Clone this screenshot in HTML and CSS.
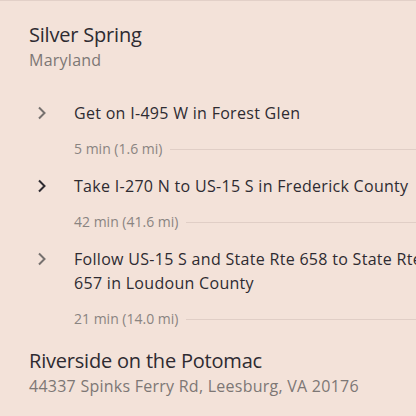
FILE: index.html
```html
<!DOCTYPE html>
<html lang="en">
<head>
  <meta charset="UTF-8">
  <title>Directions</title>
  <link rel="stylesheet" href="styles.css">
</head>
<body>
  <div class="panel">
    <div class="place">
      <div class="place-name">Silver Spring</div>
      <div class="place-sub">Maryland</div>
    </div>

    <div class="steps">
      <div class="step">
        <span class="chev"><svg width="10" height="14" viewBox="0 0 10 14"><path d="M2 1.5 L7.5 7 L2 12.5" fill="none" stroke="currentColor" stroke-width="2"/></svg></span>
        <span class="step-text">Get on I-495 W in Forest Glen</span>
      </div>
      <div class="meta"><span>5 min (1.6 mi)</span><span class="rule"></span></div>

      <div class="step active">
        <span class="chev"><svg width="10" height="14" viewBox="0 0 10 14"><path d="M2 1.5 L7.5 7 L2 12.5" fill="none" stroke="currentColor" stroke-width="2"/></svg></span>
        <span class="step-text">Take I-270 N to US-15 S in Frederick County</span>
      </div>
      <div class="meta"><span>42 min (41.6 mi)</span><span class="rule"></span></div>

      <div class="step">
        <span class="chev"><svg width="10" height="14" viewBox="0 0 10 14"><path d="M2 1.5 L7.5 7 L2 12.5" fill="none" stroke="currentColor" stroke-width="2"/></svg></span>
        <span class="step-text">Follow US-15 S and State Rte 658 to State Rte 657 in Loudoun County</span>
      </div>
      <div class="meta"><span>21 min (14.0 mi)</span><span class="rule"></span></div>
    </div>

    <div class="place end">
      <div class="place-name">Riverside on the Potomac</div>
      <div class="place-sub">44337 Spinks Ferry Rd, Leesburg, VA 20176</div>
    </div>
  </div>
</body>
</html>
```

FILE: styles.css
```css
html, body {
  margin: 0;
  padding: 0;
  background: #f3e2d9;
}
body {
  font-family: "Open Sans", sans-serif;
  color: #2e2b31;
  overflow: hidden;
  width: 416px;
  height: 416px;
}
.panel {
  border-top: 1px solid #e2d0c8;
  padding: 20px 0 0 29px;
  height: 395px;
  overflow: hidden;
}
.place-name {
  font-size: 20px;
  line-height: 28px;
  letter-spacing: -0.2px;
}
.place-sub {
  font-size: 16px;
  line-height: 22px;
  letter-spacing: 0.25px;
  color: #7d7775;
}
.steps {
  margin-top: 30px;
}
.step {
  display: flex;
  align-items: flex-start;
}
.chev {
  flex: none;
  width: 45px;
  height: 24px;
  display: flex;
  align-items: center;
  padding-left: 8px;
  box-sizing: border-box;
  color: #76716f;
}
.step.active .chev {
  color: #2e2b31;
}
.step-text {
  flex: none;
  font-size: 16px;
  line-height: 24px;
  letter-spacing: 0.3px;
  width: 350px;
}
.meta {
  display: flex;
  align-items: center;
  gap: 8px;
  padding-left: 45px;
  margin-top: 14px;
  margin-bottom: 15px;
  font-size: 14px;
  line-height: 20px;
  color: #8a8481;
}
.rule {
  flex: 1;
  border-top: 1px solid #e0cec6;
}
.place.end {
  margin-top: 18px;
}
```
